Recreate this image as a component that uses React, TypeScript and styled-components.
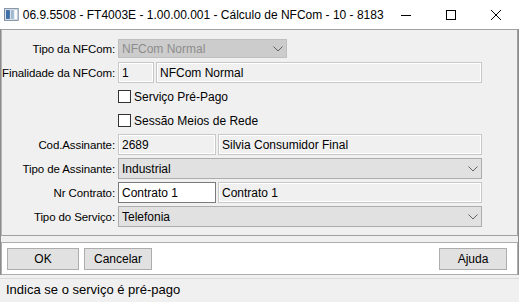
import { createGlobalStyle, styled } from "styled-components"

const GlobalStyle = createGlobalStyle`
  html, body { margin: 0; padding: 0; background: #f0f0f0; }
  body { font-family: "Liberation Sans", Arial, sans-serif; }
`

const Window = styled.div`
  width: 519px;
  height: 302px;
  display: flex;
  flex-direction: column;
  background: #f0f0f0;
  overflow: hidden;
  box-sizing: border-box;
`

const TitleBar = styled.div`
  height: 29px;
  flex: none;
  display: flex;
  align-items: center;
  background: #ffffff;
  font-size: 12px;
  color: #000;
  padding-left: 4px;
`

const TitleText = styled.span`
  margin-left: 4px;
  flex: 1;
  white-space: nowrap;
`

const ControlBtn = styled.div`
  width: 46px;
  height: 29px;
  display: flex;
  align-items: center;
  justify-content: center;
`

const Body = styled.div`
  flex: 1;
  display: flex;
  flex-direction: column;
  border-left: 1px solid #8c8c8c;
  border-right: 1px solid #8c8c8c;
`

const Panel = styled.div`
  height: 207px;
  box-sizing: border-box;
  border: 1px solid #a0a0a0;
  border-left-color: #b4b4b4;
  padding: 8px 0 0 0;
  display: flex;
  flex-direction: column;
  gap: 3px;
`

const Row = styled.div`
  height: 21px;
  display: flex;
  align-items: center;
  gap: 3px;
`

const Label = styled.div`
  width: 113px;
  flex: none;
  text-align: right;
  font-size: 11.5px;
  letter-spacing: -0.1px;
  color: #000;
  white-space: nowrap;
`

const Field = styled.div<{ $w?: number; $kind: "readonly" | "input" | "combo" | "disabled"; $h?: number }>`
  box-sizing: border-box;
  height: ${p => p.$h ?? 21}px;
  ${p => (p.$w ? `width: ${p.$w}px; flex: none;` : "flex: 1;")}
  display: flex;
  align-items: center;
  padding: 0 3px;
  font-size: 12px;
  white-space: nowrap;
  overflow: hidden;
  color: ${p => (p.$kind === "disabled" ? "#8d8d8d" : "#000")};
  background: ${p =>
    p.$kind === "input" ? "#ffffff" : p.$kind === "combo" ? "#e1e1e1" : p.$kind === "disabled" ? "#cccccc" : "#f0f0f0"};
  border: 1px solid
    ${p => (p.$kind === "input" ? "#7a7a7a" : p.$kind === "combo" ? "#adadad" : p.$kind === "disabled" ? "#bfbfbf" : "#c8c8c8")};
  box-shadow: ${p => (p.$kind === "readonly" ? "inset 0 0 0 1px #ffffff" : "none")};
`

const FieldText = styled.span`
  flex: 1;
`

const Fields = styled.div`
  width: 364px;
  flex: none;
  display: flex;
  gap: 2px;
`

const CheckRow = styled.label`
  display: flex;
  align-items: center;
  gap: 3px;
  font-size: 12px;
  color: #000;
`

const Box = styled.span`
  width: 11px;
  height: 11px;
  border: 1px solid #333333;
  background: #ffffff;
  display: inline-block;
`

const ButtonBar = styled.div`
  margin-top: 6px;
  height: 33px;
  box-sizing: border-box;
  background: #ffffff;
  border: 1px solid #adadad;
  display: flex;
  align-items: center;
  padding: 0 10px 0 5px;
  gap: 5px;
`

const Button = styled.div<{ $w: number }>`
  width: ${p => p.$w}px;
  height: 22px;
  box-sizing: border-box;
  background: #e1e1e1;
  border: 1px solid #adadad;
  display: flex;
  align-items: center;
  justify-content: center;
  font-size: 12px;
  color: #000;
`

const Spacer = styled.div`
  flex: 1;
`

const StatusBar = styled.div`
  margin-top: 3px;
  border-top: 1px solid #dadada;
  flex: 1;
  display: flex;
  align-items: center;
  padding: 0 0 2px 6px;
  font-size: 13px;
  color: #000;
  background: #f0f0f0;
`

const Chevron = () => (
  <svg width="10" height="6" viewBox="0 0 10 6">
    <path d="M0.5 0.5 L5 5 L9.5 0.5" fill="none" stroke="#606060" strokeWidth="1" />
  </svg>
)

const AppIcon = () => (
  <svg width="15" height="15" viewBox="0 0 15 15">
    <rect x="0.5" y="1.5" width="14" height="12" fill="#dfe6ee" stroke="#7a8a9a" />
    <rect x="2" y="3" width="4" height="9" fill="#3d6fa8" />
    <rect x="7" y="3" width="3" height="9" fill="#9fb8d0" />
    <rect x="11" y="3" width="2" height="9" fill="#ffffff" />
  </svg>
)

export default function App() {
  return (
    <>
      <GlobalStyle />
      <Window>
        <TitleBar>
          <AppIcon />
          <TitleText>06.9.5508 - FT4003E - 1.00.00.001 - Cálculo de NFCom - 10 - 8183</TitleText>
          <ControlBtn>
            <svg width="10" height="10" viewBox="0 0 10 10">
              <path d="M0 5.5 H10" stroke="#000" strokeWidth="1" />
            </svg>
          </ControlBtn>
          <ControlBtn>
            <svg width="10" height="10" viewBox="0 0 10 10">
              <rect x="0.5" y="0.5" width="9" height="9" fill="none" stroke="#000" strokeWidth="1" />
            </svg>
          </ControlBtn>
          <ControlBtn>
            <svg width="10" height="10" viewBox="0 0 10 10">
              <path d="M0 0 L10 10 M10 0 L0 10" stroke="#000" strokeWidth="1" />
            </svg>
          </ControlBtn>
        </TitleBar>
        <Body>
          <Panel>
            <Row>
              <Label>Tipo da NFCom:</Label>
              <Field $w={169} $h={19} $kind="disabled">
                <FieldText>NFCom Normal</FieldText>
                <Chevron />
              </Field>
            </Row>
            <Row>
              <Label>Finalidade da NFCom:</Label>
              <Fields>
                <Field $w={36} $kind="readonly">1</Field>
                <Field $kind="readonly">NFCom Normal</Field>
              </Fields>
            </Row>
            <Row>
              <Label />
              <CheckRow>
                <Box />
                Serviço Pré-Pago
              </CheckRow>
            </Row>
            <Row>
              <Label />
              <CheckRow>
                <Box />
                Sessão Meios de Rede
              </CheckRow>
            </Row>
            <Row>
              <Label>Cod.Assinante:</Label>
              <Fields>
                <Field $w={98} $kind="readonly">2689</Field>
                <Field $kind="readonly">Silvia Consumidor Final</Field>
              </Fields>
            </Row>
            <Row>
              <Label>Tipo de Assinante:</Label>
              <Fields>
                <Field $kind="combo">
                  <FieldText>Industrial</FieldText>
                  <Chevron />
                </Field>
              </Fields>
            </Row>
            <Row>
              <Label>Nr Contrato:</Label>
              <Fields>
                <Field $w={98} $kind="input">Contrato 1</Field>
                <Field $kind="readonly">Contrato 1</Field>
              </Fields>
            </Row>
            <Row>
              <Label>Tipo do Serviço:</Label>
              <Fields>
                <Field $kind="combo">
                  <FieldText>Telefonia</FieldText>
                  <Chevron />
                </Field>
              </Fields>
            </Row>
          </Panel>
          <ButtonBar>
            <Button $w={72}>OK</Button>
            <Button $w={68}>Cancelar</Button>
            <Spacer />
            <Button $w={68}>Ajuda</Button>
          </ButtonBar>
        </Body>
        <StatusBar>Indica se o serviço é pré-pago</StatusBar>
      </Window>
    </>
  )
}
